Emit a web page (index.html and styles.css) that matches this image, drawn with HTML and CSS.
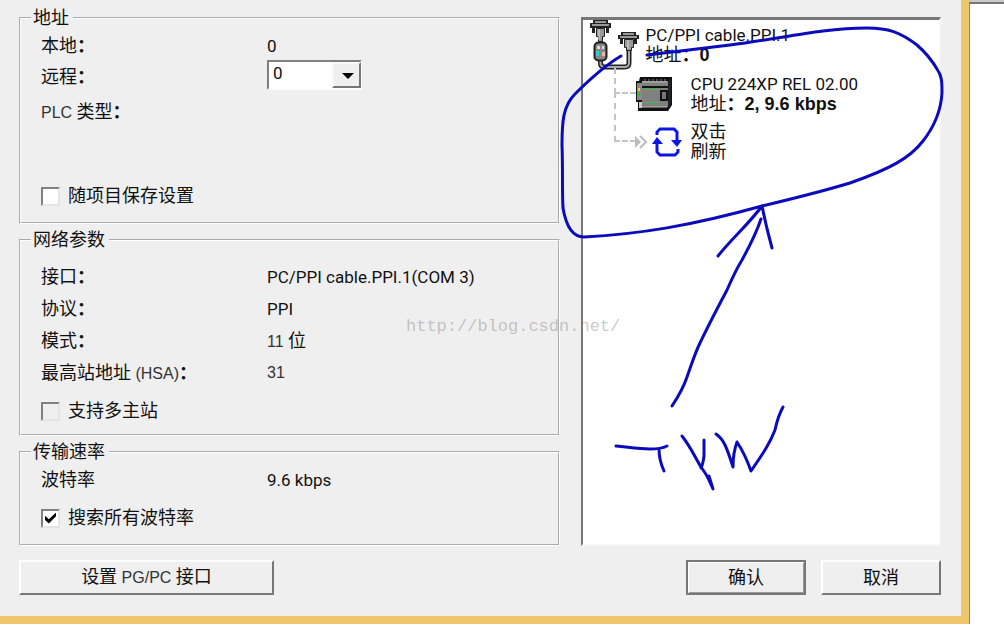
FILE: index.html
```html
<!DOCTYPE html>
<html lang="zh-CN">
<head>
    <meta charset="UTF-8">
    <meta name="viewport" content="width=device-width, initial-scale=1.0">
    <title>通信</title>
    <link rel="stylesheet" href="styles.css">
</head>
<body>
    <div class="desktop">
        <form class="dialog">
            <div class="panels">
                <div class="settings">
                    <fieldset class="group">
                        <legend>地址</legend>
                        <div class="row"><span class="name">本地<b>：</b></span><span class="value">0</span></div>
                        <div class="row row-select">
                            <label class="name" for="remote">远程<b>：</b></label>
                            <span class="combo">
                                <select id="remote" name="remote">
                                    <option>0</option>
                                </select>
                            </span>
                        </div>
                        <div class="row type"><span class="name"><small>PLC</small> 类型<b>：</b></span></div>
                        <div class="check save">
                            <input type="checkbox" id="save">
                            <label for="save">随项目保存设置</label>
                        </div>
                    </fieldset>

                    <fieldset class="group network">
                        <legend>网络参数</legend>
                        <div class="row"><span class="name">接口<b>：</b></span><span class="value">PC/PPI cable.PPI.1(COM 3)</span></div>
                        <div class="row"><span class="name">协议<b>：</b></span><span class="value">PPI</span></div>
                        <div class="row"><span class="name">模式<b>：</b></span><span><small>11</small> 位</span></div>
                        <div class="row"><span class="name">最高站地址 <small>(HSA)</small><b>：</b></span><small>31</small></div>
                        <div class="check">
                            <input type="checkbox" id="multi" disabled>
                            <label for="multi">支持多主站</label>
                        </div>
                    </fieldset>

                    <fieldset class="group">
                        <legend>传输速率</legend>
                        <div class="row"><span class="name">波特率</span><span class="value">9.6 kbps</span></div>
                        <div class="check">
                            <input type="checkbox" id="search" checked>
                            <label for="search">搜索所有波特率</label>
                        </div>
                    </fieldset>
                </div>

                <ul class="tree">
                    <li class="node">
                        <svg width="54" height="50" viewBox="0 0 54 50" aria-hidden="true">
                            <path d="M13.5 38v5q0 4 4 4h20q4.500 0 4.500-4V28" fill="none" stroke="#222" stroke-width="5"/>
                            <path d="M13.5 38v5q0 4 4 4h20q4.500 0 4.500-4V28" fill="none" stroke="#aaa" stroke-width="2"/>
                            <path d="M6 0h15v3h3v5h-2v5h-3V8H8v5H5V8H3V3h3z" fill="#222"/>
                            <path d="M8 2h11M5 5h17" stroke="#999" stroke-width="2"/>
                            <path d="M9.5 8.500h8v8h-2v5h-4v-5h-2z" fill="#999" stroke="#222"/>
                            <path d="M12 9v11" stroke="#ddd"/>
                            <rect x="7.5" y="22.5" width="12" height="18" rx="4" fill="#888" stroke="#222" stroke-width="2"/>
                            <path d="M10 26h3v3h-3zM15 26h2v3h-2z" fill="#ddd"/>
                            <path d="M9 31h3v5H9z" fill="#3cc"/>
                            <path d="M15 32h3v4h-3z" fill="#e9b5a8"/>
                            <path d="M34 12h15v3h3v4h-2v5h-3v-5H36v5h-3v-5h-2v-4h3z" fill="#222"/>
                            <path d="M36 14h11M33 17h17" stroke="#999" stroke-width="2"/>
                            <path d="M37.5 19.500h9v8h-2v3h-5v-3h-2z" fill="#999" stroke="#222"/>
                            <path d="M41 20v9" stroke="#ddd"/>
                        </svg>
                        <span><span class="value">PC/PPI cable.PPI.1</span><br>地址<b>：0</b></span>
                    </li>
                    <li class="node child cpu">
                        <svg width="37" height="34" viewBox="0 0 37 34" aria-hidden="true">
                            <path d="M4 0h32v28l-4 6H2V25H0V4h3z" fill="#111"/>
                            <path d="M6 4h26v5H6zM6 11h26v19H6z" fill="#808080"/>
                            <path d="M6 5h25M6 30h25" stroke="#bbb"/>
                            <path d="M8 3h24" stroke="#888" stroke-dasharray="2 2"/>
                            <path d="M1 6h5v17H1z" fill="#888"/>
                            <path d="M3 25h3v6H3z" fill="#ccc"/>
                            <path d="M2 11h2v3H2z" fill="#dd4"/>
                            <path d="M2 16h2v3H2z" fill="#3b3"/>
                            <path d="M8 12.500h15M8 25.500h15" stroke="#3c3" stroke-dasharray="4 1"/>
                            <path d="M25 14h6v9h-6z" fill="#777" stroke="#111" stroke-width="2"/>
                            <path d="M32 5l3-3v25l-3 4z" fill="#222"/>
                        </svg>
                        <span><span class="value">CPU 224XP REL 02.00</span><br>地址<b>：2, 9.6 kbps</b></span>
                    </li>
                    <li class="node child refresh">
                        <svg class="chevrons" width="14" height="14" viewBox="0 0 14 14" aria-hidden="true">
                            <path d="M1 1l6 6-6 6z" fill="#bbb"/>
                            <path d="M6 1l6 6-6 6" fill="none" stroke="#bbb" stroke-width="2"/>
                        </svg>
                        <svg width="30" height="30" viewBox="0 0 30 30" aria-hidden="true">
                            <path d="M5 8V5l3-3h14l3 3v9M5 16v9l3 3h15l3-3v-3" fill="none" stroke="#0d14e6" stroke-width="3"/>
                            <path d="M19 13h11l-5 7zM0 17h11l-6-7z" fill="#0d14e6"/>
                        </svg>
                        <span>双击<br>刷新</span>
                    </li>
                </ul>
            </div>

            <div class="buttons">
                <button type="button" class="wide">设置 <small>PG/PC</small> 接口</button>
                <button type="submit" class="default">确认</button>
                <button type="button">取消</button>
            </div>
        </form>
        <div class="behind"></div>

        <span class="watermark">http://blog.csdn.net/</span>
        <!-- pen marks over the dialog -->
        <svg class="ink" width="1004" height="633" viewBox="0 0 1004 633" aria-hidden="true">
            <path d="M621 56C604 66 590 79 575 94C563 106 562 122 562 145C563 170 562 190 563 208C566 226 573 237 584 237C640 234 690 226 762 206C800 197 820 192 850 183C890 169 910 158 923 141C934 127 941 110 942 93C942 82 942 76 937 69C930 57 925 52 917 45C900 32 888 28 867 28C820 28 780 39 730 45L647 55"/>
            <path d="M672 406C678 397 683 389 687 377C692 363 695 353 700 343C709 324 718 307 727 290C734 274 737 268 742 260C753 240 757 231 761 219"/>
            <path d="M718 256C731 239 749 224 762 206Q766 226 772 248"/>
            <path d="M616 446C628 447 637 449 650 449Q661 449 667 446M659 449Q659 460 664 471"/>
            <path d="M682 436C690 446 695 457 701 467Q706 474 708 478L713 489L709 476M704 440V456Q703 464 701 468"/>
            <path d="M716 434C725 440 728 452 733 467Q733 453 737 442Q745 454 751 471C764 452 770 443 775 430Q778 416 783 407"/>
        </svg>
    </div>
</body>
</html>
```
FILE: styles.css
```css
* {
    box-sizing: border-box;
}
body {
    margin: 0;
    background: #fff;
    color: #111;
    font-family: Roboto, "Noto Sans CJK SC", sans-serif;
    font-size: 18px;
    line-height: 20px;
}
small {
    font-family: "Liberation Sans", Arial, sans-serif;
    font-size: 16px;
    color: #333;
}
.value {
    font-size: 17px;
}
.desktop {
    position: relative;
    display: flex;
    align-items: flex-start;
    overflow: hidden;
}
.dialog {
    flex: 1;
    padding: 8px 20px 21px 19px;
    background: #efefef;
    border: solid #efc66b;
    border-width: 0 8px 8px 0;
    box-shadow: 1px 1px 0 #a08850;
}
.behind {
    flex: 0 0 35px;
    height: 4px;
    background: #c8c8c8;
    border-bottom: 2px solid #777;
}
.panels {
    display: grid;
    grid-template-columns: 3fr 2fr;
    gap: 21px;
}
.settings {
    display: flex;
    flex-direction: column;
    gap: 6px;
}

/* group boxes */
.group {
    margin: 0;
    padding: 2px 20px 10px;
    border: 2px groove #fff;
}
.network {
    padding-top: 11px;
    padding-bottom: 7px;
}
legend {
    margin-left: -10px;
    padding: 0 4px 0 2px;
}
.row {
    display: flex;
    align-items: center;
    height: 32px;
}
.row-select {
    align-items: flex-start;
    height: 34px;
    margin-top: -2px;
    line-height: 34px;
}
.type {
    margin-top: 2px;
}
.name {
    flex: 0 0 226px;
}
.check {
    display: flex;
    align-items: center;
    gap: 8px;
    height: 32px;
    margin-top: 6px;
}
.save {
    margin-top: 52px;
}
input[type="checkbox"] {
    appearance: none;
    width: 19px;
    height: 19px;
    margin: 0;
    background: #fff;
    border: 2px solid;
    border-color: #808080 #e4e4e4 #e4e4e4 #808080;
}
input[type="checkbox"]:disabled {
    background: #efefef;
}
input[type="checkbox"]:checked::after {
    content: "";
    display: block;
    width: 11px;
    height: 11px;
    margin: 2px;
    background: #000;
    clip-path: polygon(0 30%, 35% 62%, 100% 0, 100% 35%, 35% 100%, 0 68%);
}
.combo {
    position: relative;
    width: 95px;
    height: 30px;
}
select {
    appearance: none;
    display: block;
    width: 100%;
    height: 100%;
    padding: 0 4px 4px;
    background: #fff;
    border: 2px solid;
    border-color: #808080 #fff #fff #808080;
    border-radius: 0;
    color: #111;
    font: inherit;
    font-size: 17px;
    line-height: 20px;
}
.combo::before {
    content: "";
    position: absolute;
    top: 2px;
    right: 1px;
    bottom: 2px;
    width: 25px;
    background: #efefef;
    border: 2px solid;
    border-color: #f8f8f8 #777 #777 #f8f8f8;
    pointer-events: none;
}
.combo::after {
    content: "";
    position: absolute;
    top: 13px;
    right: 8px;
    border: 6px solid transparent;
    border-top-color: #000;
    border-bottom: 0;
    pointer-events: none;
}

/* device tree */
.tree {
    margin: 9px 0 0;
    padding: 0 0 0 4px;
    list-style: none;
    background: #fff;
    border: 2px solid;
    border-width: 3px 2px 2px 2px;
    border-color: #777 #f7f7f7 #f7f7f7 #777;
}
.tree b {
    font-family: "Liberation Sans", "Noto Sans CJK SC", sans-serif;
}
.node {
    display: flex;
    align-items: center;
    gap: 5px;
}
.child {
    position: relative;
    gap: 18px;
    margin: 4px 0 0 27px;
    padding-left: 22px;
}
.child::before {
    content: "";
    position: absolute;
    left: 0;
    bottom: 20px;
    width: 20px;
    height: 40px;
    border: dashed #c4c4c4;
    border-width: 0 0 2px 2px;
}
.cpu::before {
    height: 24px;
}
.refresh {
    gap: 9px;
    margin-top: 8px;
    padding-left: 20px;
}
.refresh::before {
    height: 48px;
}
.chevrons {
    margin-right: -5px;
}

/* button bar */
.buttons {
    display: flex;
    gap: 15px;
    margin-top: 14px;
}
button {
    width: 120px;
    height: 35px;
    padding: 0;
    background: #efefef;
    border: 2px solid;
    border-color: #fff #777 #777 #fff;
    color: #111;
    font: inherit;
}
.wide {
    width: 255px;
    margin-right: auto;
}
.default {
    border-color: #777;
    box-shadow: inset 1px 1px 0 #fff, inset -1px -1px 0 #999;
}

.watermark {
    position: absolute;
    left: 406px;
    top: 317px;
    color: rgba(120, 120, 120, 0.4);
    font-family: "Liberation Mono", monospace;
    font-size: 17px;
}
.ink {
    position: absolute;
    left: 0;
    top: 0;
    fill: none;
    pointer-events: none;
}
.ink path {
    stroke: #0b0bbd;
    stroke-width: 3px;
    stroke-linecap: round;
    stroke-linejoin: round;
}
```
